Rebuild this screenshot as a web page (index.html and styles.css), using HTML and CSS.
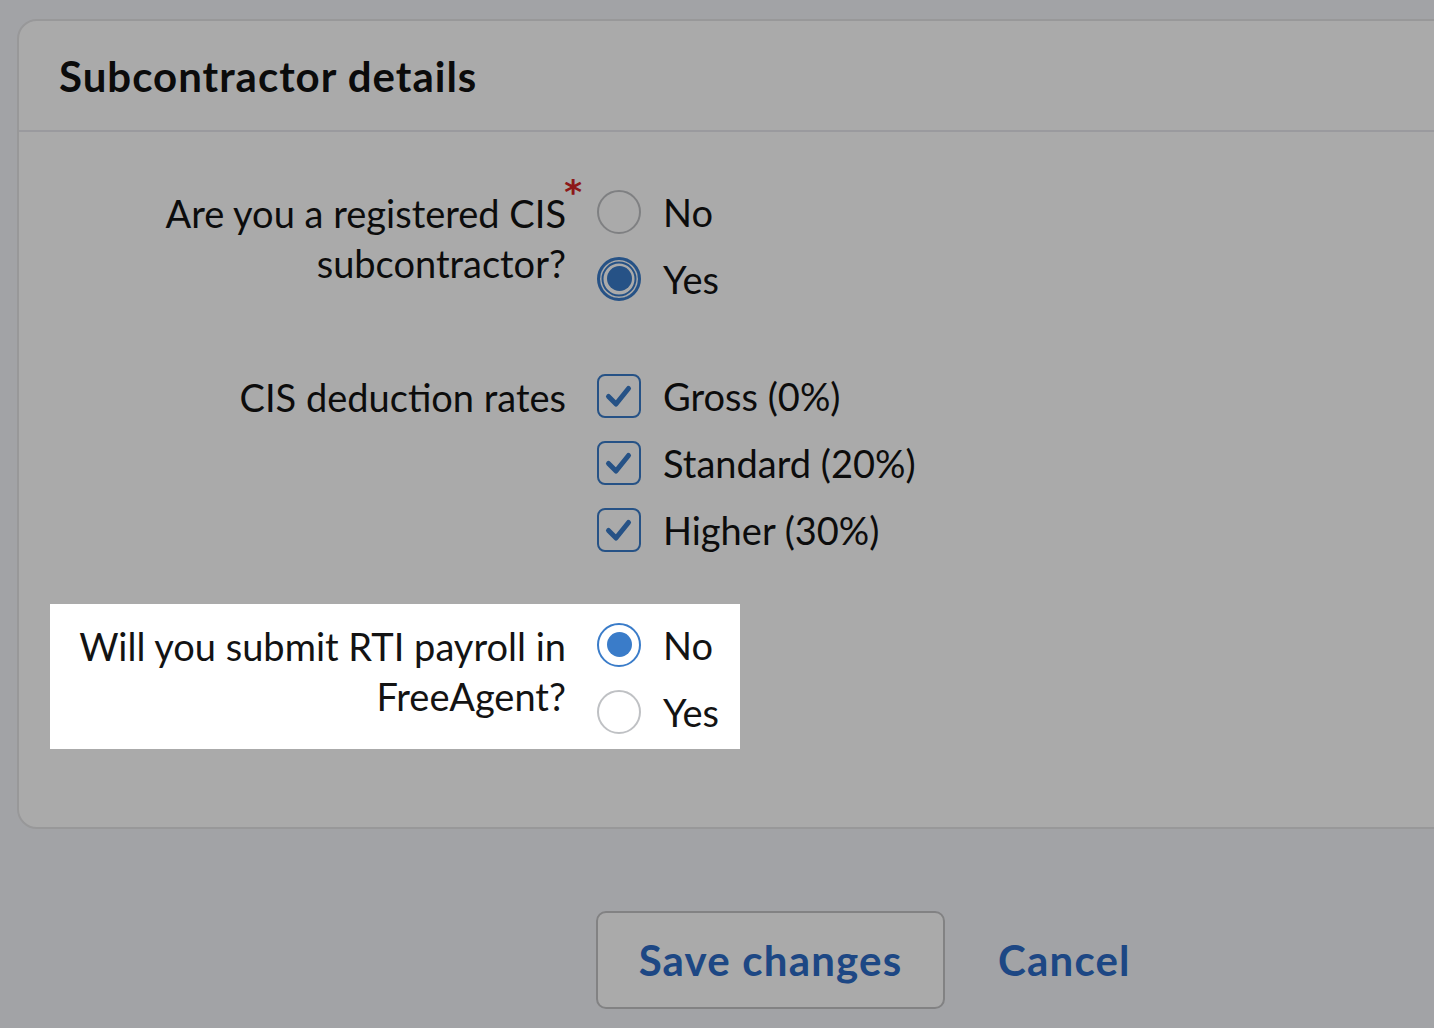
FILE: index.html
```html
<!DOCTYPE html>
<html lang="en">
<head>
<meta charset="utf-8">
<title>Subcontractor details</title>
<link rel="stylesheet" href="styles.css">
</head>
<body>
<div class="page">
  <section class="card">
    <header class="card-header">
      <h2 class="card-title">Subcontractor details</h2>
    </header>
    <div class="form">
      <div class="row row-first">
        <div class="label"><span class="label-text">Are you a registered CIS subcontractor?<span class="required">*</span></span></div>
        <div class="controls">
          <label class="option"><span class="radio"></span><span class="option-text">No</span></label>
          <label class="option"><span class="radio checked focused"><span class="dot"></span></span><span class="option-text">Yes</span></label>
        </div>
      </div>
      <div class="row row-second">
        <div class="label"><span class="label-text">CIS deduction rates</span></div>
        <div class="controls">
          <label class="option"><span class="checkbox"><svg viewBox="0 0 44 44" width="44" height="44"><path d="M11.5 22.5 L19 30 L31.5 14.5" fill="none" stroke="#3a7cc9" stroke-width="5" stroke-linecap="round" stroke-linejoin="round"/></svg></span><span class="option-text">Gross (0%)</span></label>
          <label class="option"><span class="checkbox"><svg viewBox="0 0 44 44" width="44" height="44"><path d="M11.5 22.5 L19 30 L31.5 14.5" fill="none" stroke="#3a7cc9" stroke-width="5" stroke-linecap="round" stroke-linejoin="round"/></svg></span><span class="option-text">Standard (20%)</span></label>
          <label class="option"><span class="checkbox"><svg viewBox="0 0 44 44" width="44" height="44"><path d="M11.5 22.5 L19 30 L31.5 14.5" fill="none" stroke="#3a7cc9" stroke-width="5" stroke-linecap="round" stroke-linejoin="round"/></svg></span><span class="option-text">Higher (30%)</span></label>
        </div>
      </div>
      <div class="row row-highlight">
        <div class="label"><span class="label-text">Will you submit RTI payroll in FreeAgent?</span></div>
        <div class="controls">
          <label class="option"><span class="radio checked"><span class="dot"></span></span><span class="option-text">No</span></label>
          <label class="option"><span class="radio"></span><span class="option-text">Yes</span></label>
        </div>
      </div>
    </div>
  </section>
  <div class="actions">
    <button class="btn-save" type="button">Save changes</button>
    <a class="btn-cancel" href="#">Cancel</a>
  </div>
</div>
<div class="overlay"></div>
</body>
</html>
```
FILE: styles.css
```css
html, body {
  margin: 0;
  padding: 0;
}
body {
  background: #f3f5fa;
  font-family: Lato, "Liberation Sans", sans-serif;
  color: #131313;
  overflow: hidden;
  height: 1028px;
}
.page {
  padding: 19px 0 0 17px;
}
.card {
  width: 1500px;
  background: #fff;
  border: 2px solid #e4e4e6;
  border-radius: 20px;
}
.card-header {
  height: 109px;
  border-bottom: 2px solid #e8e8ee;
  display: flex;
  align-items: center;
  padding-left: 40px;
}
.card-title {
  margin: 0;
  font-size: 42px;
  font-weight: 700;
  letter-spacing: 1px;
  color: #111;
}
.form {
  padding: 46px 0 78px 31px;
  display: flex;
  flex-direction: column;
  align-items: flex-start;
}
.row {
  display: flex;
  align-items: flex-start;
}
.row-second {
  margin-top: 50px;
}
.row-highlight {
  margin-top: 41px;
  padding: 7px 21px 4px 0;
  background: #fff;
  position: relative;
  z-index: 10;
}
.label {
  width: 516px;
  text-align: right;
  padding-top: 10px;
  font-size: 38px;
  line-height: 50px;
}
.label-text {
  position: relative;
}
.required {
  position: absolute;
  right: -16px;
  top: -15px;
  color: #d42424;
  font-family: "DejaVu Sans", sans-serif;
  font-size: 34px;
  font-weight: 700;
  line-height: 1;
}
.controls {
  margin-left: 31px;
  display: flex;
  flex-direction: column;
}
.option {
  height: 67px;
  display: flex;
  align-items: center;
  gap: 22px;
  font-size: 38px;
}
.option-text {
  line-height: 50px;
}
.radio {
  box-sizing: border-box;
  width: 44px;
  height: 44px;
  border-radius: 50%;
  border: 2px solid #bfc1c4;
  background: #fff;
  display: flex;
  align-items: center;
  justify-content: center;
  flex: none;
}
.radio.checked {
  border-color: #3a7cc9;
}
.radio.focused {
  border-width: 3px;
  box-shadow: inset 0 0 0 1.5px #fff, inset 0 0 0 3.5px #3a7cc9;
}
.dot {
  width: 25px;
  height: 25px;
  border-radius: 50%;
  background: #3a7cc9;
}
.checkbox {
  box-sizing: border-box;
  width: 44px;
  height: 44px;
  border: 2px solid #3a7cc9;
  border-radius: 8px;
  background: #fff;
  display: flex;
  align-items: center;
  justify-content: center;
  overflow: hidden;
  flex: none;
}
.checkbox svg {
  flex: none;
}
.actions {
  margin-top: 82px;
  padding-left: 579px;
  display: flex;
  align-items: center;
  gap: 53px;
}
.btn-save {
  box-sizing: border-box;
  height: 98px;
  width: 349px;
  border: 2px solid #c3c3c5;
  border-radius: 10px;
  background: #fff;
  color: #2c6bc6;
  font-family: Lato, "Liberation Sans", sans-serif;
  font-size: 42px;
  font-weight: 700;
  letter-spacing: 1.2px;
  padding: 0;
}
.btn-cancel {
  color: #2c6bc6;
  font-size: 42px;
  font-weight: 700;
  letter-spacing: 1.2px;
  text-decoration: none;
}
.overlay {
  position: fixed;
  inset: 0;
  background: rgba(0, 0, 0, 0.333);
  z-index: 5;
  pointer-events: none;
}
```
